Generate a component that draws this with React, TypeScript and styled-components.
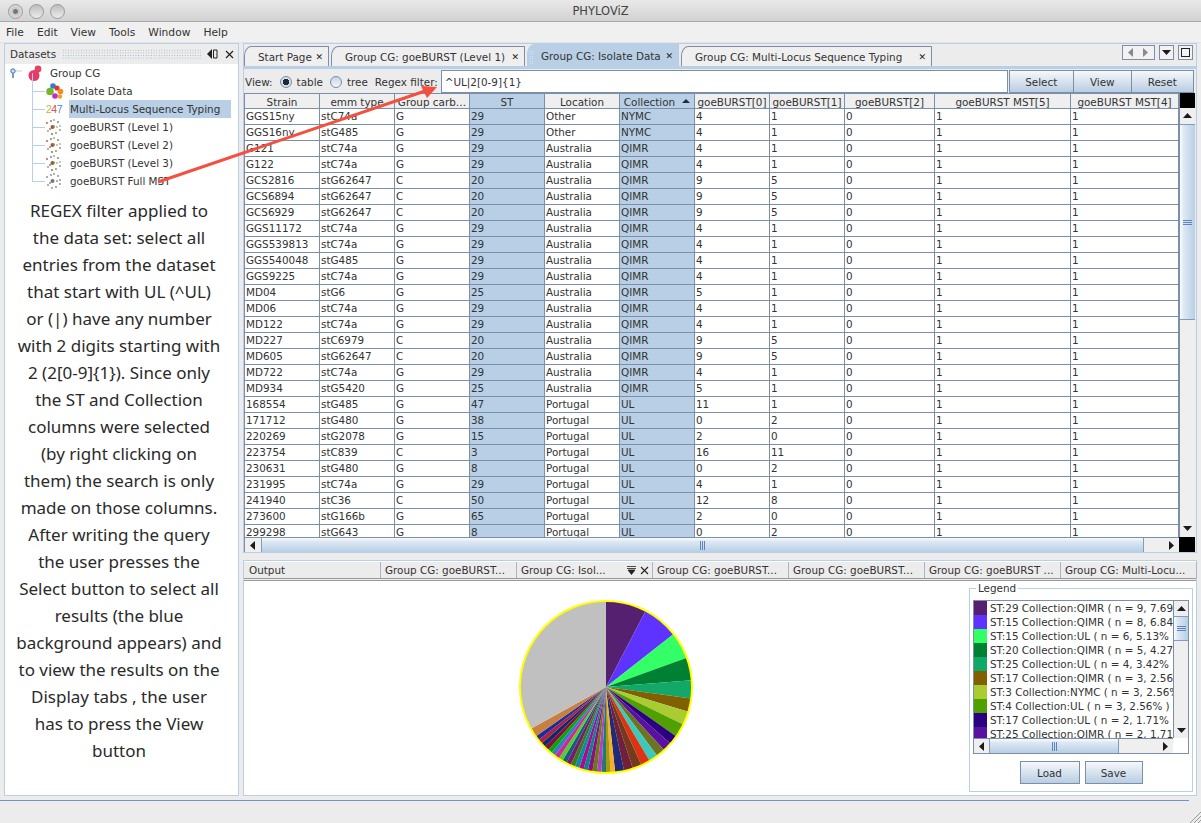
import React from "react";
import styled, { createGlobalStyle } from "styled-components";

const Global = createGlobalStyle`
  html, body { margin: 0; padding: 0; background: #ececec; }
  * { box-sizing: border-box; }
`;

const ui = `"DejaVu Sans", "Liberation Sans", sans-serif`;
const blue = "#b8cfe5";
const grid = "#7c8fa8";
const thumb = "linear-gradient(180deg,#fbfcfe 0%,#dde8f3 25%,#b8cfe5 100%)";
const thumbV = "linear-gradient(90deg,#fbfcfe 0%,#dde8f3 25%,#b8cfe5 100%)";

const Window = styled.div`
  position: relative; width: 1201px; height: 823px; overflow: hidden;
  display: flex; flex-direction: column; background: #ececec;
  font: 10.4px ${ui}; color: #333;
`;
const TitleBar = styled.div`
  height: 22px; flex: none; position: relative; display: flex; align-items: center; justify-content: center;
  background: linear-gradient(180deg,#e9e9e9,#d2d2d2); border-bottom: 1px solid #a8a8a8;
  font: 11.5px ${ui}; color: #444;
`;
const Lights = styled.div`
  position: absolute; left: 8px; top: 4px; display: flex; gap: 6px;
`;
const Light = styled.span<{ $on?: boolean }>`
  width: 15px; height: 15px; border-radius: 50%; border: 1px solid #9a9a9a;
  background: ${p => p.$on ? "radial-gradient(circle,#777 0 2px,#c8c8c8 3px,#e8e8e8 100%)" : "linear-gradient(180deg,#bdbdbd,#ececec)"};
`;
const MenuBar = styled.div`
  height: 21px; flex: none; display: flex; align-items: center; gap: 13px; padding-left: 6px;
  background: #f0f0f0; border-bottom: 1px solid #e4e4e4; font-size: 10.7px;
`;
const Body = styled.div`
  flex: none; height: 756px; display: flex; gap: 4px; padding: 0 4px 3px 4px;
`;
const LeftDock = styled.div`
  width: 235px; flex: none; display: flex; flex-direction: column; border: 1px solid ${blue}; background: #fff;
`;
const DockHead = styled.div`
  height: 20px; flex: none; display: flex; align-items: center; gap: 6px; padding: 0 4px 0 5px; background: #ececec; font-size: 10.4px;
`;
const Grip = styled.div`
  flex: 1; height: 11px;
  background-image: radial-gradient(#9fb6cf 0.7px, transparent 0.8px);
  background-size: 2.6px 2.6px;
`;
const Tree = styled.div`
  display: flex; flex-direction: column; flex: none;
`;
const TreeRow = styled.div<{ $root?: boolean }>`
  position: relative; height: 18px; display: flex; align-items: center;
  padding-left: ${p => p.$root ? "5px" : "41px"}; gap: ${p => p.$root ? "4px" : "0"};
  ${p => !p.$root && `
    &::before { content: ""; position: absolute; left: 27px; top: -9px; width: 1px; height: 18px; background: ${blue}; }
    &::after { content: ""; position: absolute; left: 27px; top: 9px; width: 13px; height: 1px; background: ${blue}; }
  `}
`;
const TreeLabel = styled.span<{ $sel?: boolean; $root?: boolean }>`
  height: 18px; line-height: 18px; margin-left: ${p => p.$root ? "2px" : "6px"};
  ${p => p.$sel && `background: ${blue}; width: 162px; padding-left: 1px; margin-left: 5px;`}
  white-space: nowrap;
`;
const Note = styled.div`
  margin-top: 7px; padding-right: 5px; text-align: center; font: 17px/27px "Noto Sans", "Open Sans", sans-serif; color: #2a2a2a;
`;
const NoteLine = styled.div`
  white-space: nowrap;
`;
const RightCol = styled.div`
  flex: 1; min-width: 0; display: flex; flex-direction: column; gap: 7px;
`;
const TopDock = styled.div`
  height: 510px; flex: none; display: flex; flex-direction: column; border: 1px solid ${blue}; background: #ececec;
`;
const TabStrip = styled.div`
  flex: none; display: flex; gap: 2px; padding: 2px 0 0 0; position: relative; border-bottom: 3px solid ${blue};
  height: 25px;
`;
const Tab = styled.div<{ $w: number; $active?: boolean }>`
  position: relative;
  width: ${p => p.$w}px; height: ${p => p.$active ? "22px" : "20px"}; margin-top: ${p => p.$active ? "-2px" : "0"};
  display: flex; align-items: center; justify-content: space-between; padding: 0 5px 0 13px;
  border: 1px solid ${p => p.$active ? blue : grid}; border-bottom: none; border-top-left-radius: 7px 10px;
  background: ${p => p.$active ? blue : "#efefef"}; white-space: nowrap;
  ${p => p.$active && `
    &::before { content: ""; position: absolute; left: 1px; top: 5px; width: 5px; height: 14px;
      background-image: radial-gradient(#f4f7fb 0.7px, transparent 0.8px); background-size: 2.5px 2.5px; }
  `}
`;
const TabX = styled.span`
  font-size: 9px; font-weight: 700; color: #222;
`;
const TabControls = styled.div`
  position: absolute; left: 878px; top: 1px; display: flex; gap: 4px;
`;
const CtlBox = styled.div<{ $w: number }>`
  width: ${p => p.$w}px; height: 15px; border: 1px solid ${grid}; background: #f2f2f2;
  display: flex; align-items: center; justify-content: space-around;
`;
const ToolBar = styled.div`
  height: 24px; flex: none; display: flex; align-items: center; padding: 1px 0 0 1px;
`;
const ViewLabel = styled.span<{ $gap?: number }>`
  white-space: nowrap; margin-left: ${p => p.$gap ?? 0}px;
`;
const Radio = styled.span<{ $on?: boolean }>`
  width: 12px; height: 12px; border-radius: 50%; border: 1px solid #7d8a99; margin: 0 5px 0 7px; flex: none;
  background: ${p => p.$on ? "radial-gradient(circle,#1e2a3a 0 3px,#d6e1ee 3.5px)" : "linear-gradient(180deg,#c2d4e8,#f4f8fc)"};
`;
const FilterInput = styled.div`
  width: 567px; height: 23px; margin-left: 3px; flex: none; border: 1px solid ${grid}; background: #fff;
  display: flex; align-items: center; padding-left: 3px;
`;
const BtnGroup = styled.div`
  display: flex; margin-left: 2px;
`;
const Btn = styled.div<{ $w: number }>`
  width: ${p => p.$w}px; height: 23px; display: flex; align-items: center; justify-content: center;
  border: 1px solid ${grid}; margin-left: -1px; background: linear-gradient(180deg,#f6f8fb,#b9cde2);
`;
const TableArea = styled.div`
  flex: 1; min-height: 0; display: grid; grid-template-columns: 1fr 16px; grid-template-rows: 1fr 15px; margin: 0 1px 0 0; border-left: 1px solid ${grid};
`;
const TableClip = styled.div`
  overflow: hidden; min-height: 0;
`;
const DataTable = styled.table`
  width: 934px; table-layout: fixed; border-collapse: separate; border-spacing: 0;
`;
const HeadCell = styled.th<{ $sel?: boolean; $sorted?: boolean }>`
  height: 15px; padding: 2px ${p => p.$sorted ? "16px" : "1px"} 0 1px; font-weight: 400; text-align: center; overflow: hidden; white-space: nowrap;
  line-height: 12px; position: relative;
  background: ${p => p.$sel ? blue : "#efefef"}; border-right: 1px solid ${grid}; border-top: 1px solid ${grid};
`;
const DataCell = styled.td<{ $sel?: boolean }>`
  height: 16px; padding: 0 0 0 1px; overflow: hidden; white-space: nowrap; line-height: 15px;
  background: ${p => p.$sel ? blue : "#fff"}; border-right: 1px solid ${grid}; border-top: 1px solid ${grid};
`;
const SortMark = styled.span`
  position: absolute; right: 4px; top: 5px; width: 0; height: 0;
  border-left: 4px solid transparent; border-right: 4px solid transparent; border-bottom: 4px solid #1d2f45;
`;
const VScroll = styled.div`
  display: flex; flex-direction: column; background: #efefef; border-left: 1px solid ${grid};
`;
const HScroll = styled.div`
  display: flex; background: #efefef; border-top: 1px solid ${grid};
`;
const Corner = styled.div<{ $h: number }>`
  height: ${p => p.$h}px; flex: none; background: #000;
`;
const SBtn = styled.div<{ $len: number; $dir: "v" | "h" }>`
  flex: none; display: flex; align-items: center; justify-content: center; background: #efefef;
  ${p => p.$dir === "v" ? `height: ${p.$len}px;` : `width: ${p.$len}px;`}
`;
const VThumb = styled.div<{ $h: number }>`
  height: ${p => p.$h}px; flex: none; display: flex; flex-direction: column; justify-content: center; align-items: center; gap: 1px;
  background: ${thumbV}; border-top: 1px solid #7e9cc4; border-bottom: 1px solid #7e9cc4;
`;
const HThumb = styled.div<{ $w: number }>`
  width: ${p => p.$w}px; flex: none; display: flex; justify-content: center; align-items: center; gap: 1px;
  background: ${thumb}; border-left: 1px solid #7e9cc4; border-right: 1px solid #7e9cc4;
`;
const GripV = styled.span`
  width: 1px; height: 9px; background: #5f84bd;
`;
const GripH = styled.span`
  width: 9px; height: 1px; background: #5f84bd;
`;
const Track = styled.div`
  flex: 1;
`;
const BottomDock = styled.div`
  flex: 1; min-height: 0; display: flex; flex-direction: column; border: 1px solid ${blue}; background: #fff;
`;
const BottomTabs = styled.div`
  height: 20px; flex: none; display: grid; grid-template-columns: repeat(7, 136px); padding-left: 1px; background: #ececec; border-top: 1px solid #fff;
  border-bottom: 3px double #9a9a9a;
`;
const BTab = styled.div`
  display: flex; align-items: center; justify-content: space-between; padding: 0 3px 0 4px; border-right: 1px solid #a9b7c6; white-space: nowrap; overflow: hidden;
`;
const BIcons = styled.span`
  display: flex; align-items: center; gap: 4px;
`;
const ChartRow = styled.div`
  flex: 1; min-height: 0; position: relative; display: flex; padding: 1px 3px 2px 0;
`;
const ChartBox = styled.div`
  flex: 1; display: flex; justify-content: center; padding: 18px 2px 0 0;
`;
const PieSvg = styled.svg`
  width: 174px; height: 174px; display: block;
`;
const Legend = styled.fieldset`
  width: 224px; height: 210px; flex: none; margin: 0; padding: 6px 3px 0 3px; border: 1px solid ${blue}; position: relative;
  display: flex; flex-direction: column; align-items: stretch;
`;
const LegendTitle = styled.legend`
  padding: 0 2px; margin-left: 3px; line-height: 12px;
`;
const LegendBox = styled.div`
  height: 154px; flex: none; width: 216px; display: grid; grid-template-columns: 1fr 15px; grid-template-rows: 1fr 15px; border: 1px solid ${grid};
`;
const LegendList = styled.div`
  overflow: hidden; display: flex; flex-direction: column; min-width: 0;
`;
const LegendRow = styled.div`
  height: 14px; flex: none; display: flex; align-items: center; white-space: nowrap;
`;
const Swatch = styled.span<{ $c: string }>`
  width: 13px; height: 14px; flex: none; background: ${p => p.$c}; margin-right: 3px;
`;
const LButtons = styled.div`
  display: flex; justify-content: center; gap: 5px; margin-top: 7px;
`;
const LBtn = styled.div<{ $w: number }>`
  width: ${p => p.$w}px; height: 23px; display: flex; align-items: center; justify-content: center;
  border: 1px solid ${grid}; background: linear-gradient(180deg,#f6f8fb,#b9cde2);
`;
const StatusBar = styled.div`
  flex: 1; position: relative; background: #ececec; padding-top: 1px;
`;
const StatusLine = styled.div`
  width: 1189px; height: 1px; background: #6f95cb;
`;
const ResizeGrip = styled.svg`
  position: absolute; right: 0; bottom: 0; width: 12px; height: 12px;
`;
const ArrowOverlay = styled.svg`
  position: absolute; left: 0; top: 0; width: 1201px; height: 823px; pointer-events: none;
`;

const Up = () => <svg width="9" height="6" viewBox="0 0 9 6"><path d="M0 5L4.5 0 9 5z" fill="#1b1b1b" /></svg>;
const Down = () => <svg width="9" height="6" viewBox="0 0 9 6"><path d="M0 0L4.5 5 9 0z" fill="#1b1b1b" /></svg>;
const L = ({ c = "#1b1b1b" }: { c?: string }) => <svg width="6" height="9" viewBox="0 0 6 9"><path d="M5 0L0 4.5 5 9z" fill={c} /></svg>;
const R = ({ c = "#1b1b1b" }: { c?: string }) => <svg width="6" height="9" viewBox="0 0 6 9"><path d="M0 0L5 4.5 0 9z" fill={c} /></svg>;

const Toggle = () => (
  <svg width="14" height="14" viewBox="0 0 14 14"><circle cx="3" cy="5" r="2.2" fill="#cfe0f2" stroke="#3e6fb0" /><path d="M3 7.5V12" stroke="#3e6fb0" strokeWidth="1.4" /><path d="M6 5h6" stroke={blue} /></svg>
);
const RootIcon = () => (
  <svg width="16" height="17" viewBox="0 0 16 17"><circle cx="10" cy="4" r="3.4" fill="#e2455f" /><circle cx="6" cy="10.5" r="5.5" fill="#e63a6c" /></svg>
);
const IsolateIcon = () => (
  <svg width="18" height="17" viewBox="0 0 18 17">
    <circle cx="7" cy="3" r="2.8" fill="#2b7fd6" /><circle cx="4" cy="8.5" r="3.8" fill="#79b52c" /><circle cx="11" cy="5" r="2.6" fill="#e0342d" />
    <circle cx="14.5" cy="8.5" r="2.8" fill="#f28a1c" /><circle cx="9" cy="13" r="2.8" fill="#c02fc0" /><circle cx="14" cy="13.5" r="2.2" fill="#f0a020" />
  </svg>
);
const MlstIcon = () => (
  <svg width="18" height="12" viewBox="0 0 18 12">
    <text x="0" y="10" fontFamily="Liberation Sans, sans-serif" fontSize="10.5"><tspan fill="#c9b23a">2</tspan><tspan fill="#d8453a" dx="-0.5">4</tspan><tspan fill="#3a8fd8" dx="-0.5">7</tspan></text>
  </svg>
);
const BurstIcon = ({ c }: { c: string }) => {
  const pts = [[8, 1], [12, 3], [14, 7], [14, 11], [10, 14], [6, 15], [2, 12], [1, 4], [5, 2], [11, 8], [4, 10]];
  const cols = ["#999", "#777", "#aaa", "#888", "#7a9a3a", "#5a7a2a", "#a88", "#d04a2a", "#777", "#aaa", "#777"];
  const grey = c === "#777";
  return (
    <svg width="18" height="16" viewBox="0 0 18 16">
      {pts.map((p, i) => <circle key={i} cx={p[0]} cy={p[1]} r="0.9" fill={grey ? "#888" : cols[i]} />)}
      <circle cx="6.5" cy="8" r="2" fill={c} />
      {!grey && <circle cx="8" cy="7.5" r="1" fill="#7a9a3a" />}
    </svg>
  );
};

const columns: [string, number][] = [["Strain", 75], ["emm type", 75], ["Group carb…", 75], ["ST", 75], ["Location", 75], ["Collection", 75], ["goeBURST[0]", 75], ["goeBURST[1]", 75], ["goeBURST[2]", 90], ["goeBURST MST[5]", 136], ["goeBURST MST[4]", 108]];

const P = "Portugal"; const A = "Australia"; const Q = "QIMR"; const U = "UL";
const rows: (string | number)[][] = [
  ["GGS15ny", "stC74a", "G", 29, "Other", "NYMC", 4, 1],
  ["GGS16ny", "stG485", "G", 29, "Other", "NYMC", 4, 1],
  ["G121", "stC74a", "G", 29, A, Q, 4, 1],
  ["G122", "stC74a", "G", 29, A, Q, 4, 1],
  ["GCS2816", "stG62647", "C", 20, A, Q, 9, 5],
  ["GCS6894", "stG62647", "C", 20, A, Q, 9, 5],
  ["GCS6929", "stG62647", "C", 20, A, Q, 9, 5],
  ["GGS11172", "stC74a", "G", 29, A, Q, 4, 1],
  ["GGS539813", "stC74a", "G", 29, A, Q, 4, 1],
  ["GGS540048", "stG485", "G", 29, A, Q, 4, 1],
  ["GGS9225", "stC74a", "G", 29, A, Q, 4, 1],
  ["MD04", "stG6", "G", 25, A, Q, 5, 1],
  ["MD06", "stC74a", "G", 29, A, Q, 4, 1],
  ["MD122", "stC74a", "G", 29, A, Q, 4, 1],
  ["MD227", "stC6979", "C", 20, A, Q, 9, 5],
  ["MD605", "stG62647", "C", 20, A, Q, 9, 5],
  ["MD722", "stC74a", "G", 29, A, Q, 4, 1],
  ["MD934", "stG5420", "G", 25, A, Q, 5, 1],
  ["168554", "stG485", "G", 47, P, U, 11, 1],
  ["171712", "stG480", "G", 38, P, U, 0, 2],
  ["220269", "stG2078", "G", 15, P, U, 2, 0],
  ["223754", "stC839", "C", 3, P, U, 16, 11],
  ["230631", "stG480", "G", 8, P, U, 0, 2],
  ["231995", "stC74a", "G", 29, P, U, 4, 1],
  ["241940", "stC36", "C", 50, P, U, 12, 8],
  ["273600", "stG166b", "G", 65, P, U, 2, 0],
  ["299298", "stG643", "G", 8, P, U, 0, 2],
];

const slices: [string, number][] = [
  ["#55206f", 9], ["#5f33ff", 8], ["#33ff66", 6], ["#008033", 5], ["#11a868", 4], ["#806000", 3], ["#aacc33", 3], ["#4fa000", 3],
  ["#2a0080", 2], ["#5a10a0", 2], ["#6e7322", 2], ["#3cc9bb", 2], ["#dd3311", 2], ["#753a1e", 2], ["#72203a", 2], ["#1f2a78", 2],
  ["#f5b02a", 1], ["#a89a10", 1], ["#1e7d6d", 1], ["#b040c8", 1], ["#6a7a10", 1], ["#8a1080", 1], ["#108090", 1], ["#a80c8c", 1],
  ["#0e88a8", 1], ["#3f7a1a", 1], ["#7a1a6a", 1], ["#1a5a7a", 1], ["#55cc33", 1], ["#cc2a90", 1], ["#3a78cc", 1], ["#00aa00", 1],
  ["#8a0a3a", 1], ["#0a2a6a", 1], ["#aa2244", 1], ["#1a2aa0", 1], ["#c88040", 2], ["#c0c0c0", 39],
];

const Pie = () => {
  const total = slices.reduce((s, x) => s + x[1], 0);
  let acc = 0;
  const pt = (a: number) => [87 + 86 * Math.sin(a), 87 - 86 * Math.cos(a)];
  return (
    <PieSvg viewBox="0 0 174 174">
      {slices.map(([c, n]) => {
        const a0 = (acc / total) * 2 * Math.PI; acc += n;
        const a1 = (acc / total) * 2 * Math.PI;
        const [x0, y0] = pt(a0); const [x1, y1] = pt(a1);
        return <path key={c} d={`M87 87L${x0} ${y0}A86 86 0 ${a1 - a0 > Math.PI ? 1 : 0} 1 ${x1} ${y1}Z`} fill={c} />;
      })}
      <circle cx="87" cy="87" r="86" fill="none" stroke="#ffff00" strokeWidth="2" />
    </PieSvg>
  );
};

const legend: [string, string][] = [
  ["#55206f", "ST:29 Collection:QIMR ( n = 9, 7.69% )"], ["#5f33ff", "ST:15 Collection:QIMR ( n = 8, 6.84% )"],
  ["#33ff66", "ST:15 Collection:UL ( n = 6, 5.13% )"], ["#008033", "ST:20 Collection:QIMR ( n = 5, 4.27% )"],
  ["#11a868", "ST:25 Collection:UL ( n = 4, 3.42% )"], ["#806000", "ST:17 Collection:QIMR ( n = 3, 2.56% )"],
  ["#aacc33", "ST:3 Collection:NYMC ( n = 3, 2.56% )"], ["#4fa000", "ST:4 Collection:UL ( n = 3, 2.56% )"],
  ["#2a0080", "ST:17 Collection:UL ( n = 2, 1.71% )"], ["#5a10a0", "ST:25 Collection:QIMR ( n = 2, 1.71% )"],
];

const noteLines = [
  "REGEX filter applied to", "the data set: select all", "entries from the dataset", "that start with UL (^UL)",
  "or (|) have any number", "with 2 digits starting with", "2 (2[0-9]{1}). Since only", "the ST and Collection",
  "columns were selected", "(by right clicking on", "them) the search is only", "made on those columns.",
  "After writing the query", "the user presses the", "Select button to select all", "results (the blue",
  "background appears) and", "to view the results on the", "Display tabs , the user", "has to press the View", "button",
];

export default function App() {
  return (
    <Window>
      <Global />
      <TitleBar>
        <Lights><Light $on /><Light /><Light /></Lights>
        PHYLOViZ
      </TitleBar>
      <MenuBar>
        {["File", "Edit", "View", "Tools", "Window", "Help"].map(m => <span key={m}>{m}</span>)}
      </MenuBar>
      <Body>
        <LeftDock>
          <DockHead>
            <span>Datasets</span>
            <Grip />
            <svg width="12" height="10" viewBox="0 0 12 10"><path d="M5 0v10L0 5z" fill="#222" /><path d="M6.5 1h3.5v8H6.5z" fill="none" stroke="#222" /></svg>
            <svg width="9" height="9" viewBox="0 0 9 9"><path d="M1 1l7 7M8 1L1 8" stroke="#222" strokeWidth="1.2" /></svg>
          </DockHead>
          <Tree>
            <TreeRow $root><Toggle /><RootIcon /><TreeLabel $root>Group CG</TreeLabel></TreeRow>
            <TreeRow><IsolateIcon /><TreeLabel>Isolate Data</TreeLabel></TreeRow>
            <TreeRow><MlstIcon /><TreeLabel $sel>Multi-Locus Sequence Typing</TreeLabel></TreeRow>
            <TreeRow><BurstIcon c="#a8552a" /><TreeLabel>goeBURST (Level 1)</TreeLabel></TreeRow>
            <TreeRow><BurstIcon c="#a8552a" /><TreeLabel>goeBURST (Level 2)</TreeLabel></TreeRow>
            <TreeRow><BurstIcon c="#a8552a" /><TreeLabel>goeBURST (Level 3)</TreeLabel></TreeRow>
            <TreeRow><BurstIcon c="#777" /><TreeLabel>goeBURST Full MST</TreeLabel></TreeRow>
          </Tree>
          <Note>{noteLines.map(l => <NoteLine key={l}>{l}</NoteLine>)}</Note>
        </LeftDock>
        <RightCol>
          <TopDock>
            <TabStrip>
              <Tab $w={85}>Start Page<TabX>✕</TabX></Tab>
              <Tab $w={194}>Group CG: goeBURST (Level 1)<TabX>✕</TabX></Tab>
              <Tab $w={152} $active>Group CG: Isolate Data<TabX>✕</TabX></Tab>
              <Tab $w={251}>Group CG: Multi-Locus Sequence Typing<TabX>✕</TabX></Tab>
              <TabControls>
                <CtlBox $w={33}><L c="#8a8a8a" /><R c="#8a8a8a" /></CtlBox>
                <CtlBox $w={15}><Down /></CtlBox>
                <CtlBox $w={15}><svg width="9" height="9" viewBox="0 0 9 9"><rect x="0.5" y="0.5" width="8" height="8" fill="none" stroke="#222" /></svg></CtlBox>
              </TabControls>
            </TabStrip>
            <ToolBar>
              <ViewLabel>View:</ViewLabel>
              <Radio $on /><ViewLabel>table</ViewLabel>
              <Radio /><ViewLabel>tree</ViewLabel>
              <ViewLabel $gap={7}>Regex filter:</ViewLabel>
              <FilterInput>^UL|2[0-9]{"{1}"}</FilterInput>
              <BtnGroup>
                <Btn $w={65}>Select</Btn>
                <Btn $w={59}>View</Btn>
                <Btn $w={63}>Reset</Btn>
              </BtnGroup>
            </ToolBar>
            <TableArea>
              <TableClip>
                <DataTable>
                  <colgroup>{columns.map(([n, w]) => <col key={n} style={{ width: w }} />)}</colgroup>
                  <thead>
                    <tr>{columns.map(([n], i) => (
                      <HeadCell key={n} $sel={i === 3 || i === 5} $sorted={i === 5}>{n}{i === 5 && <SortMark />}</HeadCell>
                    ))}</tr>
                  </thead>
                  <tbody>
                    {rows.map(r => (
                      <tr key={String(r[0])}>
                        {r.map((v, i) => <DataCell key={i} $sel={i === 3 || i === 5}>{v}</DataCell>)}
                        <DataCell>0</DataCell><DataCell>1</DataCell><DataCell>1</DataCell>
                      </tr>
                    ))}
                  </tbody>
                </DataTable>
              </TableClip>
              <VScroll>
                <Corner $h={15} />
                <SBtn $dir="v" $len={16}><Up /></SBtn>
                <VThumb $h={196}><GripH /><GripH /><GripH /></VThumb>
                <Track />
                <SBtn $dir="v" $len={16}><Down /></SBtn>
              </VScroll>
              <HScroll>
                <SBtn $dir="h" $len={16}><L /></SBtn>
                <HThumb $w={883}><GripV /><GripV /><GripV /></HThumb>
                <Track />
                <SBtn $dir="h" $len={15}><R /></SBtn>
              </HScroll>
              <Corner $h={15} />
            </TableArea>
          </TopDock>
          <BottomDock>
            <BottomTabs>
              <BTab>Output</BTab>
              <BTab>Group CG: goeBURST...</BTab>
              <BTab>Group CG: Isol...
                <BIcons>
                  <svg width="9" height="9" viewBox="0 0 9 9"><path d="M0 0.5h9M0 2.5h9M1 4h7L4.5 8.5z" stroke="#222" fill="#222" strokeWidth="0.8" /></svg>
                  <svg width="9" height="9" viewBox="0 0 9 9"><path d="M1 1l7 7M8 1L1 8" stroke="#222" strokeWidth="1.1" /></svg>
                </BIcons>
              </BTab>
              <BTab>Group CG: goeBURST...</BTab>
              <BTab>Group CG: goeBURST...</BTab>
              <BTab>Group CG: goeBURST ...</BTab>
              <BTab>Group CG: Multi-Locu...</BTab>
            </BottomTabs>
            <ChartRow>
              <ChartBox><Pie /></ChartBox>
              <Legend>
                <LegendTitle>Legend</LegendTitle>
                <LegendBox>
                  <LegendList>
                    {legend.map(([c, t]) => <LegendRow key={t}><Swatch $c={c} />{t}</LegendRow>)}
                  </LegendList>
                  <VScroll>
                    <SBtn $dir="v" $len={15}><Up /></SBtn>
                    <VThumb $h={25}><GripH /><GripH /><GripH /></VThumb>
                    <Track />
                    <SBtn $dir="v" $len={15}><Down /></SBtn>
                  </VScroll>
                  <HScroll>
                    <SBtn $dir="h" $len={15}><L /></SBtn>
                    <HThumb $w={130}><GripV /><GripV /><GripV /></HThumb>
                    <Track />
                    <SBtn $dir="h" $len={15}><R /></SBtn>
                  </HScroll>
                  <div />
                </LegendBox>
                <LButtons>
                  <LBtn $w={60}>Load</LBtn>
                  <LBtn $w={58}>Save</LBtn>
                </LButtons>
              </Legend>
            </ChartRow>
          </BottomDock>
        </RightCol>
      </Body>
      <StatusBar>
        <StatusLine />
        <ResizeGrip viewBox="0 0 12 12"><path d="M1 12L12 1M5 12l7-7M9 12l3-3" stroke="#999" /></ResizeGrip>
      </StatusBar>
      <ArrowOverlay viewBox="0 0 1201 823">
        <path d="M158 182L428 90" stroke="#f4503f" strokeWidth="3" fill="none" />
        <path d="M437 87L421 86 427 98z" fill="#f4503f" />
      </ArrowOverlay>
    </Window>
  );
}
